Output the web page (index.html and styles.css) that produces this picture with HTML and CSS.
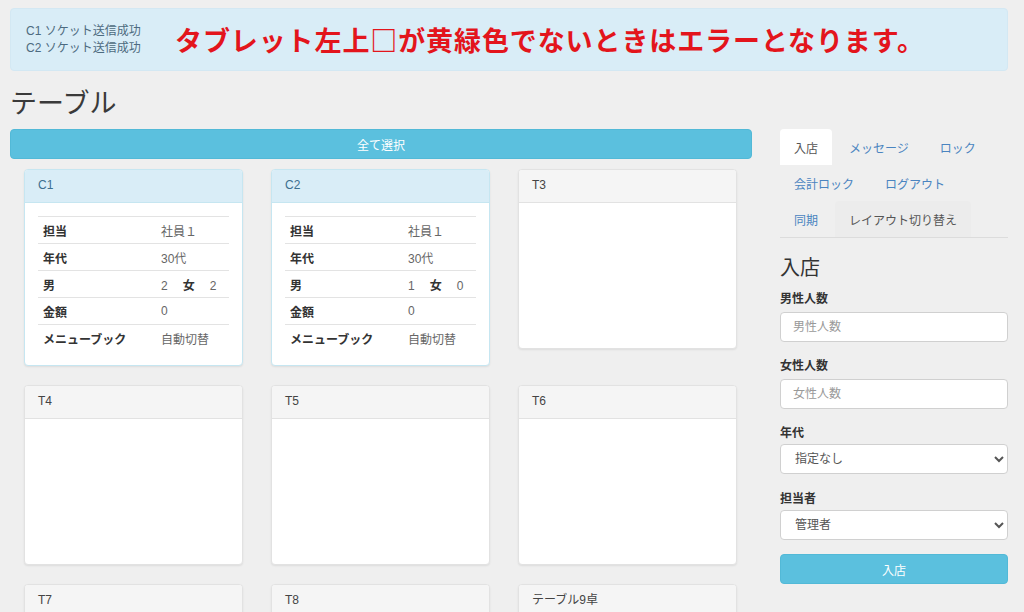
FILE: index.html
```html
<!DOCTYPE html>
<html lang="ja">
<head>
<meta charset="utf-8">
<title>テーブル</title>
<link rel="stylesheet" href="styles.css">
</head>
<body>
<div class="page">
  <div class="alert">
    <div class="alert-log">
      <div>C1 ソケット送信成功</div>
      <div>C2 ソケット送信成功</div>
    </div>
    <div class="alert-msg">タブレット左上□が黄緑色でないときはエラーとなります。</div>
  </div>

  <h1 class="title">テーブル</h1>

  <div class="main">
    <div class="left">
      <button class="btn btn-all">全て選択</button>
      <div class="grid">
        <div class="card card-info">
          <div class="card-head">C1</div>
          <div class="card-body">
            <table class="info-table">
              <tr><th>担当</th><td>社員１</td></tr>
              <tr><th>年代</th><td>30代</td></tr>
              <tr><th>男</th><td>2<b class="fem">女</b>2</td></tr>
              <tr><th>金額</th><td>0</td></tr>
              <tr><th>メニューブック</th><td>自動切替</td></tr>
            </table>
          </div>
        </div>
        <div class="card card-info">
          <div class="card-head">C2</div>
          <div class="card-body">
            <table class="info-table">
              <tr><th>担当</th><td>社員１</td></tr>
              <tr><th>年代</th><td>30代</td></tr>
              <tr><th>男</th><td>1<b class="fem">女</b>0</td></tr>
              <tr><th>金額</th><td>0</td></tr>
              <tr><th>メニューブック</th><td>自動切替</td></tr>
            </table>
          </div>
        </div>
        <div class="card"><div class="card-head">T3</div><div class="card-body empty"></div></div>
        <div class="card"><div class="card-head">T4</div><div class="card-body empty"></div></div>
        <div class="card"><div class="card-head">T5</div><div class="card-body empty"></div></div>
        <div class="card"><div class="card-head">T6</div><div class="card-body empty"></div></div>
        <div class="card"><div class="card-head">T7</div><div class="card-body empty"></div></div>
        <div class="card"><div class="card-head">T8</div><div class="card-body empty"></div></div>
        <div class="card"><div class="card-head">テーブル9卓</div><div class="card-body empty"></div></div>
      </div>
    </div>

    <div class="right">
      <ul class="tabs">
        <li class="tab active">入店</li>
        <li class="tab">メッセージ</li>
        <li class="tab">ロック</li>
        <li class="tab">会計ロック</li>
        <li class="tab">ログアウト</li>
        <li class="tab">同期</li>
        <li class="tab tab-dark">レイアウト切り替え</li>
      </ul>

      <h2 class="form-title">入店</h2>
      <div class="form-group">
        <label class="form-label">男性人数</label>
        <input class="form-control" type="text" placeholder="男性人数">
      </div>
      <div class="form-group">
        <label class="form-label">女性人数</label>
        <input class="form-control" type="text" placeholder="女性人数">
      </div>
      <div class="form-group sel">
        <label class="form-label">年代</label>
        <select class="form-control form-select"><option>指定なし</option></select>
      </div>
      <div class="form-group sel">
        <label class="form-label">担当者</label>
        <select class="form-control form-select"><option>管理者</option></select>
      </div>
      <button class="btn btn-enter">入店</button>
    </div>
  </div>
</div>
</body>
</html>
```

FILE: styles.css
```css
* { box-sizing: border-box; }

html, body {
  margin: 0;
  padding: 0;
  background: #efefef;
  overflow: hidden;
}

body {
  font-family: "Liberation Sans", "Noto Sans CJK JP", sans-serif;
  font-size: 12px;
  color: #333;
}

.page {
  padding: 8px 16px 0 10px;
  height: 612px;
  overflow: hidden;
}

.alert {
  display: flex;
  align-items: center;
  height: 63px;
  padding: 0 15px;
  background: #d9edf7;
  border: 1px solid #d3e8f3;
  border-radius: 4px;
}

.alert-log {
  width: 149px;
  color: #4d6b80;
  font-size: 12px;
  line-height: 17px;
  margin-top: 1px;
}

.alert-msg {
  font-family: "Noto Sans CJK JP", sans-serif;
  color: #e3151c;
  font-size: 27px;
  font-weight: bold;
  line-height: 32px;
  letter-spacing: 0.9px;
}

.title {
  margin: 18px 0 10px;
  font-size: 27px;
  font-weight: normal;
  line-height: 30px;
  color: #3a3a3a;
}

.main {
  display: flex;
  gap: 28px;
  align-items: flex-start;
}

.left {
  width: 742px;
  flex: none;
}

.right {
  flex: 1;
}

.btn {
  display: block;
  width: 100%;
  height: 30px;
  border: 1px solid #52b9d7;
  border-radius: 4px;
  background: #5bc0de;
  color: #fff;
  font-family: inherit;
  font-size: 12px;
  cursor: pointer;
}

.grid {
  display: grid;
  grid-template-columns: repeat(3, 1fr);
  column-gap: 28px;
  row-gap: 19px;
  align-items: start;
  padding: 10px 15px 0 14px;
}

.card {
  background: #fff;
  border: 1px solid #e2e2e2;
  border-radius: 4px;
  box-shadow: 0 1px 2px rgba(0, 0, 0, 0.08);
  overflow: hidden;
}

.card-head {
  height: 33px;
  padding: 0 13px;
  line-height: 31px;
  background: #f5f5f5;
  border-bottom: 1px solid #e2e2e2;
  color: #444;
  font-size: 12px;
}

.card-info {
  border-color: #c6e6f1;
}

.card-info .card-head {
  background: #d9edf7;
  border-bottom-color: #c6e6f1;
  color: #3d6f8f;
}

.card-body {
  padding: 13px 13px 13px;
}

.card-body.empty {
  height: 145px;
}

.info-table {
  width: 100%;
  border-collapse: collapse;
}

.info-table th,
.info-table td {
  height: 27px;
  padding: 0 5px;
  border-top: 1px solid #e3e3e3;
  text-align: left;
  vertical-align: middle;
  font-size: 12px;
}

.info-table th {
  width: 118px;
  font-weight: bold;
  color: #333;
}

.info-table td {
  color: #666;
}

.fem {
  color: #333;
  margin: 0 15px;
}

.tabs {
  display: flex;
  flex-wrap: wrap;
  list-style: none;
  margin: 0;
  padding: 0;
  border-bottom: 1px solid #dcdcdc;
}

.tab {
  margin-right: 3px;
  padding: 12px 14px 8px;
  line-height: 16px;
  font-size: 12px;
  color: #4a84c0;
  border-radius: 4px 4px 0 0;
}

.tab.active {
  background: #fff;
  color: #555;
}

.tab.tab-dark {
  color: #555;
  background: #ececec;
}

.form-title {
  margin: 19px 0 10px;
  font-size: 20px;
  font-weight: normal;
  line-height: 22px;
  color: #333;
}

.form-group {
  margin-bottom: 14px;
}

.form-group.sel {
  margin-bottom: 15px;
}

.form-label {
  display: block;
  padding-top: 2px;
  margin-bottom: 4px;
  font-weight: bold;
  line-height: 17px;
  font-size: 12px;
  color: #333;
}

.form-group.sel .form-label {
  margin-bottom: 2px;
}

.form-control {
  display: block;
  width: 100%;
  height: 30px;
  padding: 0 12px;
  border: 1px solid #d0d0d0;
  border-radius: 4px;
  background: #fff;
  font-family: inherit;
  font-size: 12px;
  color: #555;
}

.form-control::placeholder {
  color: #999;
}

.form-select {
  padding-left: 10px;
}

.btn-enter {
  margin-top: -1px;
}
```
